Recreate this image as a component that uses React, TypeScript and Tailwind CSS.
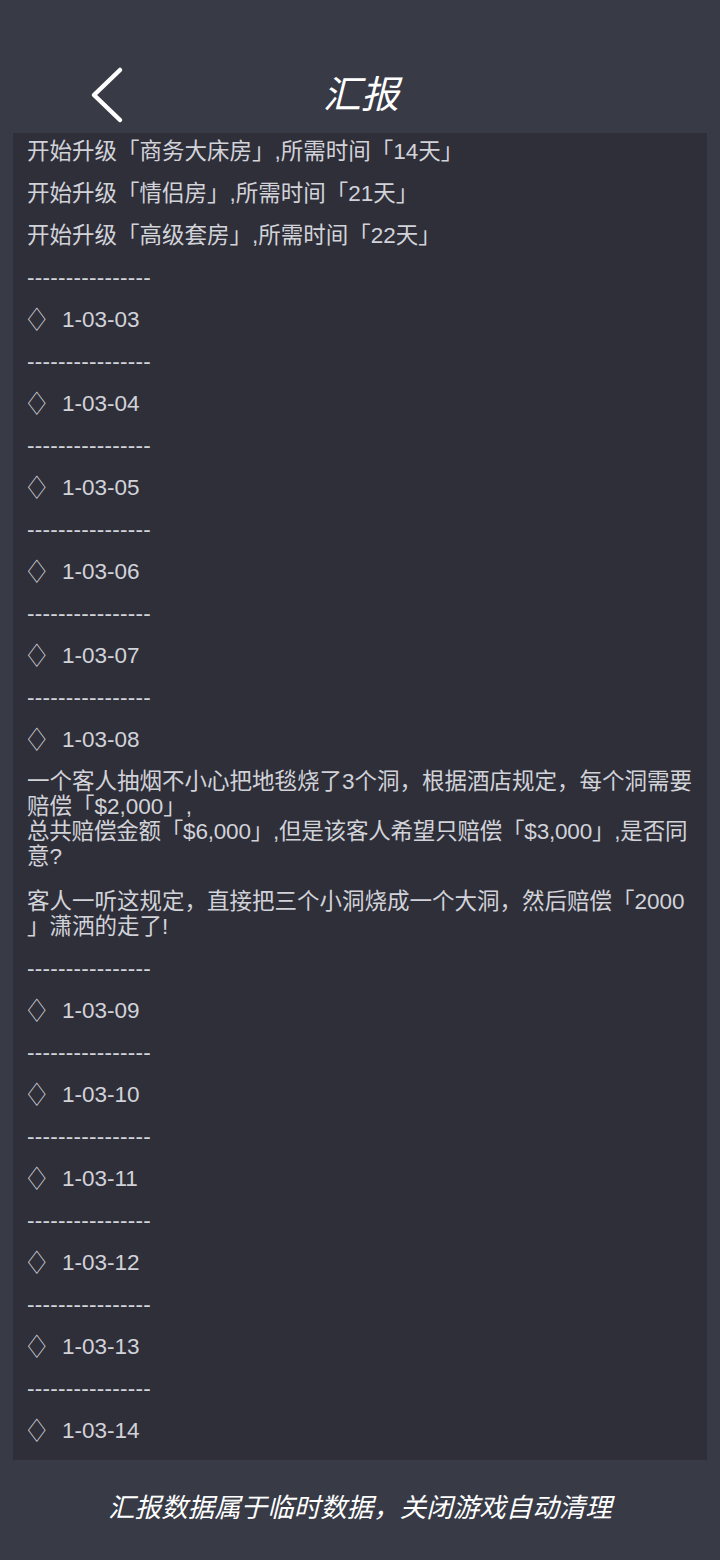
const font = { fontFamily: '"Liberation Sans", "Noto Sans CJK SC", sans-serif' }

const topLines = [
  '开始升级「商务大床房」,所需时间「14天」',
  '开始升级「情侣房」,所需时间「21天」',
  '开始升级「高级套房」,所需时间「22天」',
]

const Divider = () => (
  <div className="py-[8.5px] leading-[25px] tracking-[0.25px] text-[#d2d3d9]">----------------</div>
)

const DateRow = ({ date }: { date: string }) => (
  <div className="py-[8.5px] leading-[25px] flex items-center">
    <span className="inline-block w-[35px] text-[24px] leading-[25px] pl-[1px] scale-x-75 origin-left">◇</span>
    <span>{date}</span>
  </div>
)

const ReportPage = () => {
  const firstDates = ['1-03-03', '1-03-04', '1-03-05', '1-03-06', '1-03-07', '1-03-08']
  const laterDates = ['1-03-09', '1-03-10', '1-03-11', '1-03-12', '1-03-13', '1-03-14']

  return (
    <div className="w-[720px] h-[1560px] bg-[#383b46] flex flex-col" style={font}>
      {/* title bar */}
      <header className="h-[133px] pt-[56px] grid grid-cols-[1fr_auto_1fr] items-center">
        <div className="pl-[90px] flex items-center">
          <svg width="34" height="58" viewBox="0 0 34 58" fill="none">
            <path
              d="M30 4 L4 29 L30 54"
              stroke="#ffffff"
              strokeWidth="4.5"
              strokeLinecap="round"
              strokeLinejoin="round"
            />
          </svg>
        </div>
        <h1 className="text-[38px] italic text-white leading-none pl-[2px]">汇报</h1>
        <div />
      </header>

      {/* report log */}
      <section className="mx-[13px] h-[1327px] bg-[#2f2f3a] overflow-hidden px-[14px] text-[22.5px] text-[#d2d3d9]">
        <div className="-mt-[3px]">
          {topLines.map((line) => (
            <div key={line} className="py-[8.5px] leading-[25px]">
              {line}
            </div>
          ))}
          {firstDates.map((d) => (
            <div key={d}>
              <Divider />
              <DateRow date={d} />
            </div>
          ))}
          <div className="py-[8.5px] leading-[25px] whitespace-nowrap">
            <div>一个客人抽烟不小心把地毯烧了3个洞，根据酒店规定，每个洞需要</div>
            <div>赔偿「$2,000」,</div>
            <div className="tracking-[-0.2px]">总共赔偿金额「$6,000」,但是该客人希望只赔偿「$3,000」,是否同</div>
            <div>意?</div>
          </div>
          <div className="pt-[11.5px] pb-[9px] leading-[25px] whitespace-nowrap">
            <div>客人一听这规定，直接把三个小洞烧成一个大洞，然后赔偿「2000</div>
            <div>」潇洒的走了!</div>
          </div>
          {laterDates.map((d) => (
            <div key={d}>
              <Divider />
              <DateRow date={d} />
            </div>
          ))}
        </div>
      </section>

      {/* footer note */}
      <footer className="flex-1 flex items-center justify-center pb-[2px]">
        <p className="text-[26.5px] italic text-white">汇报数据属于临时数据，关闭游戏自动清理</p>
      </footer>
    </div>
  )
}

export default ReportPage
